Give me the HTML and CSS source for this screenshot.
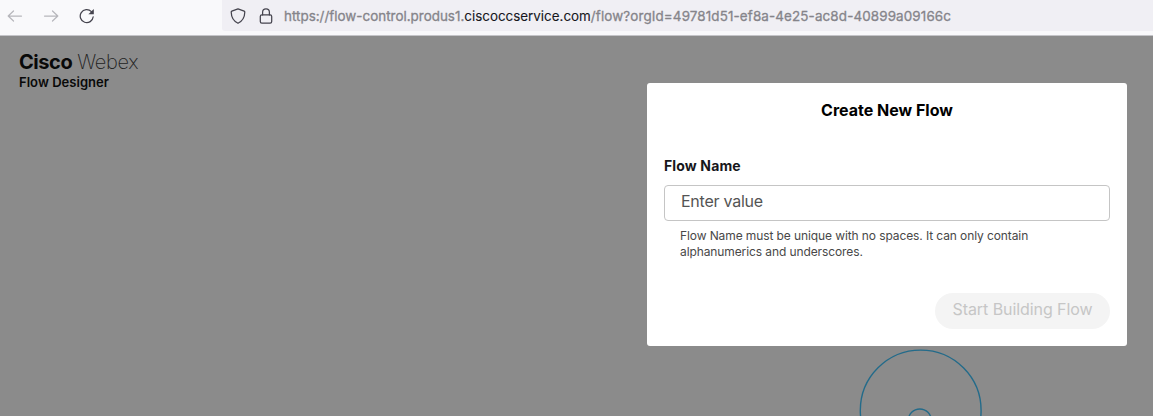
FILE: index.html
```html
<!DOCTYPE html>
<html lang="en">
<head>
<meta charset="utf-8">
<title>Flow Designer</title>
<link rel="stylesheet" href="styles.css">
</head>
<body>
<header class="toolbar">
  <nav class="nav">
    <svg class="icon nav-off" viewBox="0 0 16 16"><path d="M14.500 8H1.400M6.500 3 1.200 8l5.300 5"/></svg>
    <svg class="icon nav-off" viewBox="0 0 16 16"><path d="M1.500 8h13.100M9.500 3l5.300 5-5.300 5"/></svg>
    <svg class="icon" viewBox="0 0 16 16"><path d="M14.2 8.8A6.5 6.5 0 1 1 12.4 3.6"/><path class="fill" d="M14.8 1v5.2H9.4z"/></svg>
  </nav>
  <div class="address">
    <svg class="icon" viewBox="0 0 16 16"><path d="M8 .9 14.2 3.1q.7.3.6 1C14.7 9.4 12.5 13.2 8 15.3 3.5 13.2 1.300 9.400 1.200 4.100q-.1-.7.6-1z"/></svg>
    <svg class="icon lock" viewBox="0 0 16 16"><rect x="2.300" y="6.900" width="11.400" height="8.300" rx="1.600"/><path d="M4.600 6.900V4.200a3.400 3.400 0 0 1 6.800 0v2.700"/></svg>
    <div class="url"><span class="sub">https://flow-control.produs1.</span><span class="host">ciscoccservice.com</span><span class="path">/flow?orgId=49781d51-ef8a-4e25-ac8d-40899a09166c</span></div>
  </div>
</header>
<main class="page">
  <div class="brand">
    <div class="logo"><span class="cisco">Cisco</span><span class="webex">Webex</span></div>
    <div class="product">Flow Designer</div>
  </div>
  <svg class="art" viewBox="0 0 124 68"><circle cx="61.700" cy="62.500" r="60.400"/><circle cx="60.800" cy="72.500" r="11.500"/></svg>
  <section class="dialog">
    <h1 class="title">Create New Flow</h1>
    <div class="label">Flow Name</div>
    <div class="field">Enter value</div>
    <p class="hint">Flow Name must be unique with no spaces. It can only contain<br>alphanumerics and underscores.</p>
    <button class="start" disabled>Start Building Flow</button>
  </section>
</main>
</body>
</html>
```
FILE: styles.css
```css
* { box-sizing: border-box; }
body { margin: 0; width: 1153px; height: 416px; overflow: hidden; background: #8b8b8b; font-family: Inter, sans-serif; white-space: nowrap; }
.toolbar { height: 36px; background: #f9f9fb; border-bottom: 1px solid #c4c4c8; display: flex; }
.nav { width: 222px; height: 31px; padding-left: 7px; display: flex; align-items: center; gap: 20px; }
.icon { width: 16px; height: 16px; flex: none; fill: none; stroke: #45444e; stroke-width: 1.25; stroke-linecap: round; stroke-linejoin: round; }
.nav-off { stroke: #b7b7bc; }
.icon .fill { fill: #45444e; stroke: none; }
.address { flex: 1; height: 31px; padding-left: 8px; background: #f0eff4; border-radius: 0 0 0 3px; display: flex; align-items: center; }
.lock { margin-left: 12px; }
.url { margin: 1px 0 0 10px; font-size: 13.4px; line-height: 20px; color: #85848a; -webkit-text-stroke: .3px; }
.sub { letter-spacing: .02px; }
.host { color: #17171d; -webkit-text-stroke: .1px; }
.path { letter-spacing: .14px; }
.page { position: relative; height: 380px; }
.brand { padding: 14px 0 0 19px; color: #090909; }
.logo { display: flex; gap: 5px; font-size: 20px; line-height: 24px; }
.cisco { font-weight: 700; letter-spacing: -.45px; }
.webex { font-weight: 200; letter-spacing: -.35px; color: #222; }
.product { font-size: 13px; line-height: 16px; font-weight: 600; letter-spacing: .04px; }
.art { position: absolute; left: 859px; top: 312px; width: 124px; height: 68px; fill: none; stroke: #236b8a; stroke-width: 1.4; }
.dialog { position: absolute; left: 647px; top: 47px; width: 480px; height: 263px; padding: 16px 17px; background: #fff; border-radius: 3px; display: flex; flex-direction: column; }
.title { margin: 0; text-align: center; font-size: 16px; line-height: 22px; font-weight: 700; color: #000; }
.label { margin-top: 35px; font-size: 14px; line-height: 20px; font-weight: 700; letter-spacing: .14px; color: #17171b; }
.field { margin-top: 9px; height: 36px; padding: 0 16px; border: 1px solid #c5c5c5; border-radius: 4px; font-size: 16px; line-height: 31px; letter-spacing: -.25px; color: #545454; }
.hint { margin: 7px 0 0 16px; font-size: 12px; line-height: 16px; letter-spacing: -.1px; color: #484848; }
.start { align-self: flex-end; margin-top: 33px; width: 175px; height: 36px; padding: 0 0 3px; border: 0; border-radius: 18px; background: #f4f4f4; color: #c6c6c6; font: 16px/33px Inter, sans-serif; letter-spacing: -.08px; }
```
